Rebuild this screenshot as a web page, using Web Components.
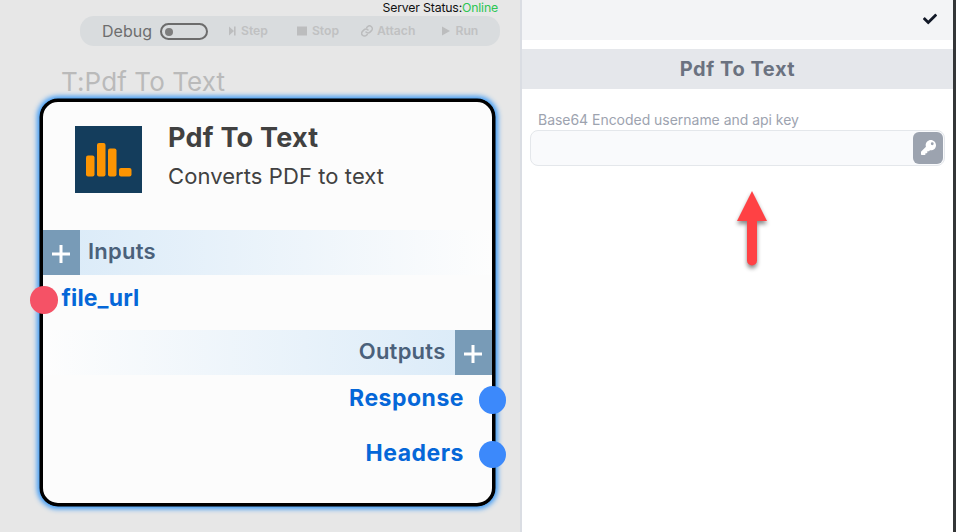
<!DOCTYPE html>
<html lang="en"><head><meta charset="utf-8"><title>Pdf To Text</title>
<style>html,body{margin:0;width:956px;height:532px;overflow:hidden;background:#fff}body{font-family:Inter,"Liberation Sans",sans-serif}</style>
</head><body><flow-app></flow-app>
<script>
const define=(name,html)=>customElements.define(name,class extends HTMLElement{
  connectedCallback(){
    if(this.shadowRoot)return;
    const t=document.createElement('template');
    t.innerHTML='<style>*{box-sizing:border-box}:host{box-sizing:border-box;display:block}svg{display:block}</style>'+html;
    this.attachShadow({mode:'open'}).append(t.content.cloneNode(true));
  }
});

define('server-status',`<style>
:host{height:16px;text-align:right;padding-right:22px;font-size:12.3px;line-height:15px;color:#111;letter-spacing:-.18px;white-space:nowrap}
b{font-weight:400;color:#2dc653}</style>Server Status:<b><slot></slot></b>`);

define('tool-button',`<style>
:host{display:flex;align-items:center;gap:5px;font-size:12.2px;font-weight:600;color:#c0c1c2;line-height:30px;white-space:nowrap}
:host(.attach){gap:4px}
</style><slot name="icon"></slot><span><slot></slot></span>`);

define('debug-toggle',`<style>
:host{display:flex;align-items:center;gap:8px;font-size:16px;color:#6e6e6e;line-height:29px}
i{display:block;width:48px;height:17px;border:2px solid #6c6c6c;border-radius:9px;padding:2px 3px;margin-top:1px}
i::before{content:"";display:block;width:8px;height:8px;margin-top:.5px;border-radius:50%;background:#7e7e7e}
</style><span><slot></slot></span><i></i>`);

define('tool-bar',`<style>
:host{width:420px;height:30px;margin-left:80px;border-radius:14px;background:#d9dcde;display:flex;align-items:center;padding-left:22px}
.step{margin-left:21px}.stop{margin-left:29px}.attach{margin-left:22px}.run{margin-left:27px}
</style><debug-toggle>Debug</debug-toggle>
<tool-button class="step"><svg slot="icon" width="7" height="10" viewBox="0 0 7 10" fill="#bcbdbe"><path d="M0 .5 5 5 0 9.500zM5 .5h1.600v9H5z"/></svg>Step</tool-button>
<tool-button class="stop"><svg slot="icon" width="10" height="10"><path fill="#bcbdbe" d="M0 .5h10v9H0z"/></svg>Stop</tool-button>
<tool-button class="attach"><svg slot="icon" width="12" height="12" viewBox="0 0 24 24" fill="none" stroke="#bbbcbd" stroke-width="3" stroke-linecap="round"><path d="M10 14a5.500 5.500 0 0 0 8 .3l3-3A5.500 5.500 0 0 0 13 3.500l-1.500 1.500M14 10a5.500 5.500 0 0 0-8-.3l-3 3a5.500 5.500 0 0 0 8 7.800l1.500-1.500"/></svg>Attach</tool-button>
<tool-button class="run"><svg slot="icon" width="8" height="10"><path fill="#bcbdbe" d="M0 .5 8 5 0 9.500z"/></svg>Run</tool-button>`);

define('section-band',`<style>
:host{display:flex;height:45px;margin-bottom:1px;background:linear-gradient(90deg,#d9eaf8,#fdfdfd);font-size:22px;font-weight:600;color:#4b617b;line-height:43px;letter-spacing:.25px}
:host([side=out]){flex-direction:row-reverse;background:linear-gradient(270deg,#d9eaf8,#fdfdfd)}
i{width:37px;height:45px;background:#789bb7;display:grid;place-items:center;padding:3px 1px 0 0}
span{padding:0 9px 0 8px}
</style><i><svg width="18" height="18"><path d="M9 0v18M0 9h18" stroke="#fff" stroke-width="3"/></svg></i><span><slot></slot></span>`);

define('node-port',`<style>
:host{display:flex;height:54.5px;padding-top:10px;align-items:flex-start;color:#0567d8;font-size:23px;font-weight:700;line-height:26px;letter-spacing:.15px}
i{width:27.500px;height:27.500px;border-radius:50%;background:#f55266;flex:none;margin:0 4px 0 -13px}
span{margin-top:-1px}
:host([side=out]){flex-direction:row-reverse;letter-spacing:.5px}
:host([side=out]) i{background:#3c89fb;margin:0 -14.500px 0 14.500px}
</style><i></i><span><slot></slot></span>`);

define('chart-logo',`<style>:host{width:67px;height:67px;background:#143d5c;flex:none}</style>
<svg width="67" height="67" fill="#fd9502"><rect x="11" y="29.500" width="8.500" height="21" rx="2"/><rect x="22" y="17" width="8.500" height="33.500" rx="2"/><rect x="33" y="22.500" width="8.500" height="28" rx="2"/><rect x="44" y="42" width="12.500" height="8.500" rx="2"/></svg>`);

define('flow-node',`<style>
:host{width:454.500px;height:406.500px;margin:0 0 0 40px;border:3px solid #000;border-radius:18px;background:#fcfcfc;box-shadow:0 0 0 .5px #000,0 0 5px 3px #3f9bf5}
header{display:flex;height:128px;padding:24px 0 0 32px;gap:26px;color:#414141}
h1{margin:-5px 0 0;font-size:27px;line-height:34px;font-weight:700;white-space:nowrap;letter-spacing:.25px}
p{margin:7px 0 0;font-size:22px;line-height:28px;white-space:nowrap;letter-spacing:.08px}
.file{height:54px}
</style><header><chart-logo></chart-logo><div><h1>Pdf To Text</h1><p>Converts PDF to text</p></div></header>
<section-band>Inputs</section-band><node-port class="file">file_url</node-port>
<section-band side="out">Outputs</section-band><node-port side="out">Response</node-port><node-port side="out">Headers</node-port>`);

define('flow-canvas',`<style>
:host{width:522px;height:532px;background:#e7e7e7;border-right:2px solid #dadde3;overflow:hidden}
h2{margin:19px 0 0 61px;height:34px;font-size:26px;line-height:33px;font-weight:400;color:#bababa;letter-spacing:.1px}
</style><server-status>Online</server-status><tool-bar></tool-bar><h2>T:Pdf To Text</h2><flow-node></flow-node>`);

define('secret-field',`<style>
:host{padding:22px 8px 0}
label{display:block;height:19px;padding-left:8px;font-size:14px;line-height:17px;color:#9da3af;white-space:nowrap;letter-spacing:-.03px}
div{height:36px;border:1px solid #e4e7eb;border-radius:8px;background:#f9fafc;display:flex;justify-content:flex-end;padding:1px}
i{width:30px;height:32px;border-radius:6px;background:#9ca3af;display:grid;place-items:center;padding-bottom:2px}
</style><label><slot></slot></label><div><i><svg width="15" height="15" viewBox="0 0 512 512" fill="#fff"><path d="M512 177c0 97-79 176-176 176-11 0-22-1-33-3l-27 30a24 24 0 0 1-18 8h-42v42a24 24 0 0 1-24 24h-40v34a24 24 0 0 1-24 24H24a24 24 0 0 1-24-24v-78c0-6 3-13 7-17l162-162c-6-17-9-35-9-55C160 79 239 0 336 0s176 79 176 177zM336 128a48 48 0 1 0 96 0 48 48 0 0 0-96 0z"/></svg></i></div>`);

define('side-panel',`<style>
:host{width:434px;height:532px;background:#fff;border-right:3px solid #343638}
nav{height:40px;background:#f3f4f6;display:flex;justify-content:flex-end;align-items:center;padding:0 16px 2px 0}
h2{margin:9px 0 0;height:40px;background:#e5e7eb;text-align:center;font-size:20px;font-weight:700;line-height:40px;color:#6b7280;letter-spacing:.55px}
</style><nav><svg width="14" height="14" viewBox="0 0 512 512" fill="#111827"><path d="M174 439 7 273c-10-10-10-26 0-36l37-37c10-10 26-10 36 0l112 112L432 72c10-10 26-10 36 0l37 37c10 10 10 26 0 36L210 439c-10 10-26 10-36 0z"/></svg></nav>
<h2>Pdf To Text</h2><secret-field>Base64 Encoded username and api key</secret-field>`);

define('callout-arrow',`<style>:host{position:absolute;left:732px;top:186px}</style>
<svg width="42" height="92" overflow="visible"><path d="M20 5 35 35H25V74.500a5 5 0 0 1-10 0V35H5z" fill="#ff4144" style="filter:drop-shadow(0 3px 2px #0007)"/></svg>`);

define('flow-app',`<style>:host{display:flex;width:956px;height:532px;position:relative}</style>
<flow-canvas></flow-canvas><side-panel></side-panel><callout-arrow></callout-arrow>`);
</script></body></html>
